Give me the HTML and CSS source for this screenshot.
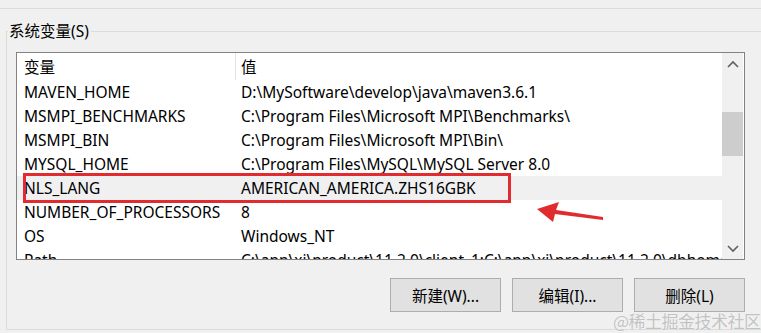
FILE: index.html
```html
<!DOCTYPE html>
<html lang="zh-CN">
<head>
    <meta charset="UTF-8">
    <title>系统变量</title>
    <link rel="stylesheet" href="styles.css">
</head>
<body>
    <div class="top-rule"></div>

    <fieldset class="group">
        <legend>系统变量(S)</legend>

        <div class="list-box">
            <div class="list-body">
                <div class="row header">
                    <div class="col-name">变量</div>
                    <div class="col-value">值</div>
                </div>
                <div class="row">
                    <div class="col-name">MAVEN_HOME</div>
                    <div class="col-value">D:\MySoftware\develop\java\maven3.6.1</div>
                </div>
                <div class="row">
                    <div class="col-name">MSMPI_BENCHMARKS</div>
                    <div class="col-value">C:\Program Files\Microsoft MPI\Benchmarks\</div>
                </div>
                <div class="row">
                    <div class="col-name">MSMPI_BIN</div>
                    <div class="col-value">C:\Program Files\Microsoft MPI\Bin\</div>
                </div>
                <div class="row">
                    <div class="col-name">MYSQL_HOME</div>
                    <div class="col-value">C:\Program Files\MySQL\MySQL Server 8.0</div>
                </div>
                <div class="row selected">
                    <div class="col-name">NLS_LANG</div>
                    <div class="col-value">AMERICAN_AMERICA.ZHS16GBK</div>
                </div>
                <div class="row">
                    <div class="col-name">NUMBER_OF_PROCESSORS</div>
                    <div class="col-value">8</div>
                </div>
                <div class="row">
                    <div class="col-name">OS</div>
                    <div class="col-value">Windows_NT</div>
                </div>
                <div class="row">
                    <div class="col-name">Path</div>
                    <div class="col-value">C:\app\xi\product\11.2.0\client_1;C:\app\xi\product\11.2.0\dbhome_1\bin;</div>
                </div>

                <!-- annotation -->
                <div class="mark-box"></div>
                <svg class="mark-arrow" width="70" height="24" viewBox="0 0 70 24">
                    <path d="M2 9 L24 2 L21 10 L68 17 L68 20 L20 14 L18 22 Z" fill="#e22b2f"/>
                </svg>
            </div>

            <div class="scrollbar">
                <div class="scroll-btn">
                    <svg width="12" height="8" viewBox="0 0 12 8"><path d="M1 7 L6 2 L11 7" fill="none" stroke="#606060" stroke-width="1.6"/></svg>
                </div>
                <div class="scroll-track">
                    <div class="scroll-thumb"></div>
                </div>
                <div class="scroll-btn">
                    <svg width="12" height="8" viewBox="0 0 12 8"><path d="M1 1 L6 6 L11 1" fill="none" stroke="#606060" stroke-width="1.6"/></svg>
                </div>
            </div>
        </div>

        <div class="buttons">
            <button class="btn">新建(W)...</button>
            <button class="btn">编辑(I)...</button>
            <button class="btn">删除(L)</button>
        </div>
    </fieldset>

    <div class="watermark">@稀土掘金技术社区</div>
</body>
</html>
```

FILE: styles.css
```css
:root {
    --bg: #f0f0f0;
    --rule: #dcdcdc;
    --list-border: #828282;
    --mark: #e22b2f;
}
* { box-sizing: border-box; }
body { margin: 0; width: 761px; height: 333px; overflow: hidden; position: relative; background: var(--bg); color: #000; font-family: "Noto Sans", "Noto Sans CJK SC", sans-serif; font-size: 15.5px; }
.top-rule { height: 9px; border-bottom: 1px solid var(--rule); }
.group { margin: 12px 0 0 6px; padding: 0; width: 755px; height: 309px; border: 1px solid var(--rule); border-right: 0; }
.group legend { padding: 0 2px 0 1px; margin-left: 1px; line-height: 20px; }
.list-box { display: flex; width: 729px; height: 208px; margin: 11px 0 0 9px; border: 1px solid var(--list-border); background: #fff; }
.list-body { position: relative; flex: 1; overflow: hidden; }
.row { display: flex; height: 24px; align-items: center; white-space: nowrap; }
.row.header { height: 27px; }
.row.selected { background: #f0f0f0; }
.col-name { width: 219px; flex-shrink: 0; padding-left: 7px; }
.header .col-name { border-right: 1px solid #e5e5e5; height: 100%; display: flex; align-items: center; }
.col-value { padding-left: 5px; }
.scrollbar { width: 21px; margin-right: 1px; display: flex; flex-direction: column; background: var(--bg); }
.scroll-btn { height: 21px; display: flex; align-items: center; justify-content: center; }
.scroll-track { flex: 1; padding-top: 38px; }
.scroll-thumb { height: 44px; background: #cdcdcd; }
.mark-box { position: absolute; left: 6px; top: 120px; width: 488px; height: 30px; border: 3px solid var(--mark); }
.mark-arrow { position: absolute; left: 518px; top: 147px; }
.buttons { display: flex; justify-content: flex-end; gap: 11px; width: 738px; margin-top: 18px; }
.btn { width: 111px; height: 34px; background: #e1e1e1; border: 1px solid #adadad; border-radius: 0; font-family: inherit; font-size: 15.5px; color: #000; padding: 0; }
.watermark { position: absolute; left: 613px; top: 308px; font-family: "Noto Sans CJK SC", sans-serif; font-size: 17px; color: #c2c2c2; text-shadow: 0 0 1px #fff; letter-spacing: -0.5px; }
```
